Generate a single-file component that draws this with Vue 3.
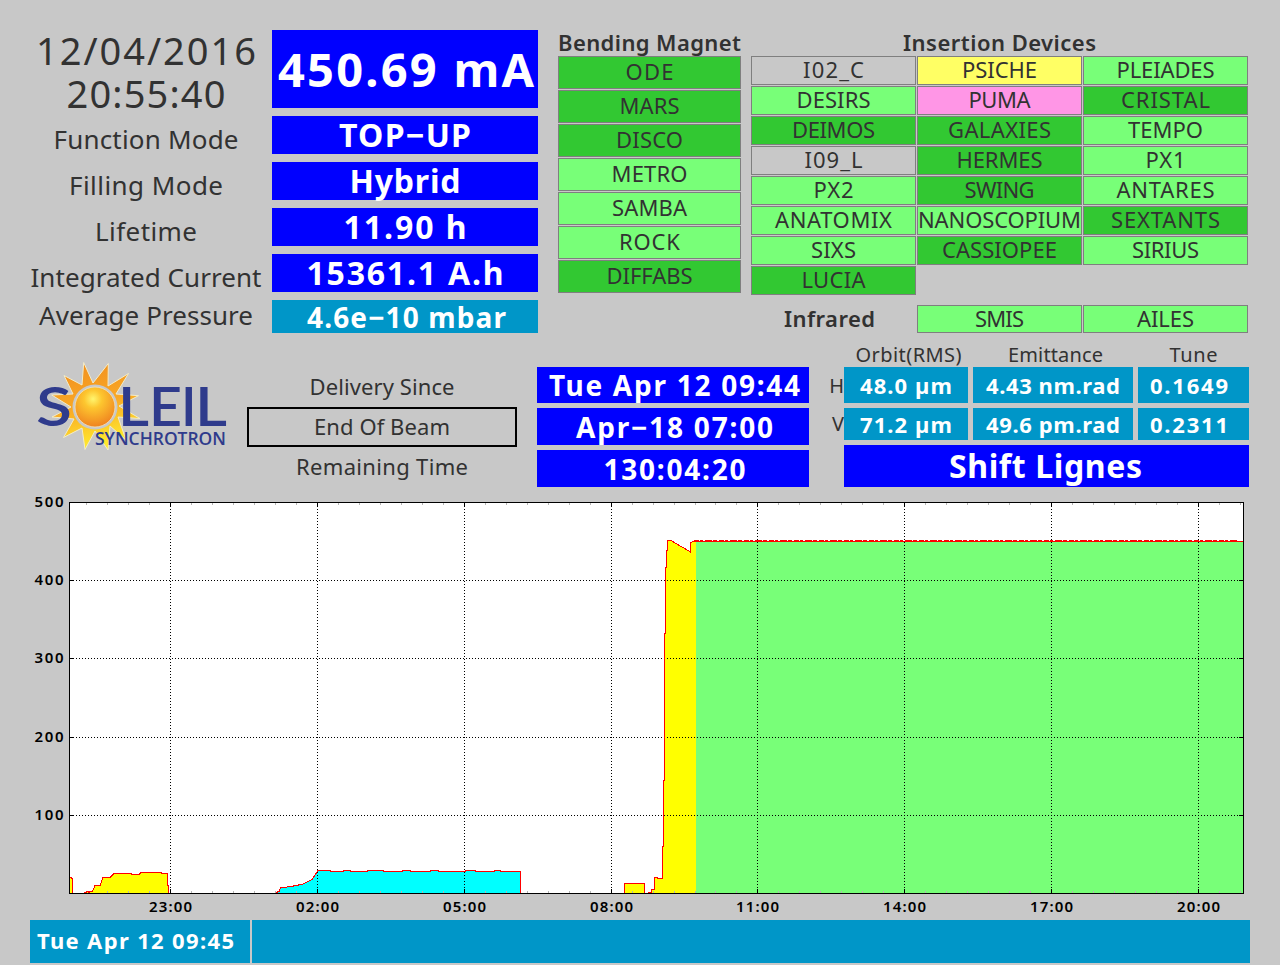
<template>
  <div class="panel">
    <section class="top">
      <div class="labels">
        <div class="clock"><span v-fit="220">12/04/2016</span></div>
        <div class="clock"><span v-fit="159">20:55:40</span></div>
        <div v-for="item in machine" :key="item.label" class="label">
          <span v-fit="item.labelWidth">{{ item.label }}</span>
        </div>
      </div>

      <div class="values">
        <div class="value current"><span v-fit="256">450.69 mA</span></div>
        <div v-for="item in machine" :key="item.value" class="value">
          <span v-fit="item.valueWidth">{{ item.value }}</span>
        </div>
      </div>

      <div class="magnets">
        <h2><span v-fit="183">Bending Magnet</span></h2>
        <div v-for="line in magnets" :key="line.name" class="beamline" :class="line.state">
          <span v-fit="line.width">{{ line.name }}</span>
        </div>
      </div>

      <div class="insertion">
        <h2><span v-fit="193">Insertion Devices</span></h2>
        <div class="insertion-grid">
          <div v-for="line in devices" :key="line.name" class="beamline" :class="line.state">
            <span v-fit="line.width">{{ line.name }}</span>
          </div>
        </div>
        <div class="infrared">
          <h2><span v-fit="91">Infrared</span></h2>
          <div class="beamline open"><span v-fit="49">SMIS</span></div>
          <div class="beamline open"><span v-fit="57">AILES</span></div>
        </div>
      </div>
    </section>

    <section class="middle">
      <svg class="logo" viewBox="30 358 205 96" width="205" height="96">
        <defs>
          <radialGradient id="sun" cx="0.45" cy="0.3" r="0.75">
            <stop offset="0" stop-color="#fff56e" />
            <stop offset="0.3" stop-color="#fdc62f" />
            <stop offset="1" stop-color="#ee7c1e" />
          </radialGradient>
          <linearGradient id="rays" x1="0" y1="0" x2="0.25" y2="1">
            <stop offset="0" stop-color="#f08c1e" />
            <stop offset="0.55" stop-color="#f9a825" />
            <stop offset="1" stop-color="#ffe92e" />
          </linearGradient>
        </defs>
        <polygon
          points="83.7,362.5 93,383 108.3,363.5 108,386 128.5,373.5 116,394 138.5,395.7 119,406 140,418.5 118,417 126,440 110,426 108,450 95,431 85,449.5 82,428 63.5,437.5 74,419 52,417 71,407 51.7,395 73,394 64,375.5 82,385"
          fill="url(#rays)"
          stroke="#f2ecca"
          stroke-width="1"
        />
        <circle cx="95" cy="407" r="22.5" fill="#c8c8c8" />
        <circle cx="95" cy="407" r="20" fill="url(#sun)" stroke="#f1e3bd" stroke-width="0.8" />
        <g class="logo-name">
          <text x="36" y="426" textLength="36" lengthAdjust="spacingAndGlyphs">S</text>
          <text x="118" y="426" textLength="31" lengthAdjust="spacingAndGlyphs">L</text>
          <text x="149" y="426" textLength="33" lengthAdjust="spacingAndGlyphs">E</text>
          <text x="181" y="426">I</text>
          <text x="195" y="426" textLength="32" lengthAdjust="spacingAndGlyphs">L</text>
        </g>
        <text class="logo-sub" x="95" y="445" textLength="131" lengthAdjust="spacingAndGlyphs">SYNCHROTRON</text>
      </svg>

      <div class="delivery-labels">
        <div class="delivery-label"><span v-fit="145">Delivery Since</span></div>
        <div class="delivery-label boxed"><span v-fit="136">End Of Beam</span></div>
        <div class="delivery-label"><span v-fit="172">Remaining Time</span></div>
      </div>

      <div class="delivery-values">
        <div class="value"><span v-fit="251">Tue Apr 12 09:44</span></div>
        <div class="value"><span v-fit="197">Apr−18 07:00</span></div>
        <div class="value"><span v-fit="142">130:04:20</span></div>
      </div>

      <div class="axis-names">
        <div>H</div>
        <div>V</div>
      </div>

      <div class="beam">
        <div class="beam-head"><span v-fit="106">Orbit(RMS)</span></div>
        <div class="beam-head"><span v-fit="95">Emittance</span></div>
        <div class="beam-head"><span v-fit="48">Tune</span></div>
        <div v-for="cell in beam" :key="cell.text" class="value">
          <span v-fit="cell.width">{{ cell.text }}</span>
        </div>
        <div class="value shift"><span v-fit="193">Shift Lignes</span></div>
      </div>
    </section>

    <svg class="chart" viewBox="30 497 1220 423" width="1220" height="423">
      <rect x="69" y="502" width="1175" height="392" fill="#fff" />

      <path v-for="area in areas" :key="area.d" :d="area.d" :fill="area.fill" />

      <g shape-rendering="crispEdges">
        <line v-for="x in minorTicks" :key="'b' + x" :x1="x" :x2="x" y1="891" y2="893" stroke="#b4b4b4" />
        <line v-for="x in minorTicks" :key="'t' + x" :x1="x" :x2="x" y1="503" y2="505" stroke="#b4b4b4" />
        <g stroke="#000" stroke-dasharray="1 2">
          <line v-for="t in xTicks" :key="t.text" :x1="t.x" :x2="t.x" y1="503" y2="893" />
          <line v-for="t in yTicks" :key="t.text" :y1="t.y" :y2="t.y" x1="70" x2="1243" />
        </g>
        <g stroke="#000">
          <line v-for="t in xTicks" :key="'b' + t.text" :x1="t.x" :x2="t.x" y1="889" y2="893" />
          <line v-for="t in xTicks" :key="'t' + t.text" :x1="t.x" :x2="t.x" y1="503" y2="507" />
          <line v-for="t in yTicks" :key="'l' + t.text" :y1="t.y" :y2="t.y" x1="70" x2="74" />
          <line v-for="t in yTicks" :key="'r' + t.text" :y1="t.y" :y2="t.y" x1="1239" x2="1243" />
        </g>
        <path v-for="d in curves" :key="d" :d="d" fill="none" stroke="#f00" />
        <rect x="69.5" y="502.5" width="1174" height="391" fill="none" stroke="#000" />
      </g>

      <g class="tick-text">
        <text x="34.5" y="507" textLength="29">500</text>
        <text v-for="t in yTicks" :key="t.text" x="34.5" :y="t.y + 4.5" textLength="29">{{ t.text }}</text>
        <text v-for="t in xTicks" :key="t.text" :x="t.x - 21.5" y="912" textLength="43">{{ t.text }}</text>
      </g>
    </svg>

    <footer class="status">
      <div class="status-time"><span v-fit="197">Tue Apr 12 09:45</span></div>
      <div class="status-message"></div>
    </footer>
  </div>
</template>

<script setup>
// Spreads the letters of an element so that the text takes the given width
const vFit = {
  mounted(el, { value }) {
    const count = el.textContent.length
    const spacing = (value - el.getBoundingClientRect().width) / (count - 1)
    el.style.letterSpacing = spacing + 'px'
    el.style.marginRight = -spacing + 'px'
  }
}

const machine = [
  { label: 'Function Mode', labelWidth: 185, value: 'TOP−UP', valueWidth: 132 },
  { label: 'Filling Mode', labelWidth: 154, value: 'Hybrid', valueWidth: 111 },
  { label: 'Lifetime', labelWidth: 102, value: '11.90 h', valueWidth: 123 },
  { label: 'Integrated Current', labelWidth: 231, value: '15361.1 A.h', valueWidth: 197 },
  { label: 'Average Pressure', labelWidth: 214, value: '4.6e−10 mbar', valueWidth: 199 }
]

const magnets = [
  { name: 'ODE', state: 'beam-on', width: 48 },
  { name: 'MARS', state: 'beam-on', width: 60 },
  { name: 'DISCO', state: 'beam-on', width: 67 },
  { name: 'METRO', state: 'open', width: 76 },
  { name: 'SAMBA', state: 'open', width: 75 },
  { name: 'ROCK', state: 'open', width: 61 },
  { name: 'DIFFABS', state: 'beam-on', width: 86 }
]

const devices = [
  { name: 'I02_C', state: 'off', width: 61 },
  { name: 'PSICHE', state: 'waiting', width: 75 },
  { name: 'PLEIADES', state: 'open', width: 98 },
  { name: 'DESIRS', state: 'open', width: 74 },
  { name: 'PUMA', state: 'fault', width: 62 },
  { name: 'CRISTAL', state: 'beam-on', width: 89 },
  { name: 'DEIMOS', state: 'beam-on', width: 83 },
  { name: 'GALAXIES', state: 'beam-on', width: 103 },
  { name: 'TEMPO', state: 'open', width: 75 },
  { name: 'I09_L', state: 'off', width: 58 },
  { name: 'HERMES', state: 'beam-on', width: 86 },
  { name: 'PX1', state: 'open', width: 40 },
  { name: 'PX2', state: 'open', width: 40 },
  { name: 'SWING', state: 'beam-on', width: 70 },
  { name: 'ANTARES', state: 'open', width: 98 },
  { name: 'ANATOMIX', state: 'open', width: 117 },
  { name: 'NANOSCOPIUM', state: 'open', width: 163 },
  { name: 'SEXTANTS', state: 'beam-on', width: 109 },
  { name: 'SIXS', state: 'open', width: 45 },
  { name: 'CASSIOPEE', state: 'beam-on', width: 115 },
  { name: 'SIRIUS', state: 'open', width: 67 },
  { name: 'LUCIA', state: 'beam-on', width: 64 }
]

const beam = [
  { text: '48.0 µm', width: 92 },
  { text: '4.43 nm.rad', width: 134 },
  { text: '0.1649', width: 78 },
  { text: '71.2 µm', width: 92 },
  { text: '49.6 pm.rad', width: 134 },
  { text: '0.2311', width: 78 }
]

const xTicks = [
  { x: 170.5, text: '23:00' },
  { x: 317.5, text: '02:00' },
  { x: 464.5, text: '05:00' },
  { x: 611.5, text: '08:00' },
  { x: 757.5, text: '11:00' },
  { x: 904.5, text: '14:00' },
  { x: 1051.5, text: '17:00' },
  { x: 1198.5, text: '20:00' }
]

const yTicks = [
  { y: 580.5, text: '400' },
  { y: 658.5, text: '300' },
  { y: 737.5, text: '200' },
  { y: 815.5, text: '100' }
]

// Seven minor intervals between two labelled hours
const minorTicks = []
for (let i = -4; i <= 51; i++) {
  if (i % 7 !== 0) minorTicks.push(Math.floor(170.5 + i * 20.98) + 0.5)
}

const start = 'M69.5 877.5H71.5V878.5H72.5V893'
const evening = 'M84 892.5H86.5V891.5H88.5V892.5H89.5V891.5H92.5L95 885.5H100L103 877.5H110L114 873.5H131.5V874.5H139L141 872.5H161.5V873.5H167.5V885.5H168.5V893'
const night = 'M276 892.5L279 891.5L280.5 887.5H286L288 886.5H292L295 885.5H298L299 884.5H302L312 879.5L318 870.5H330V871.5H343V870.5H350V871.5H367V870.5H383V871.5H402V870.5H410V871.5H430V870.5H438V871.5H465V870.5H475V871.5H494V870.5H500V871.5H520.5V893'
const step = 'M624.5 893V883.5H644.5V893'
const ramp = 'M648 892.5H651.5V889.5H654.5V877.5H657.5V878.5H662.5V846.5H663.5V780H664.5V633H665.5V567.5H666.5V550.5H667.5V540.5H671L690.5 552V542.5L694 541H696'

// Top-up keeps the current flat, with a one pixel ripple
const plateau = 'M694 541.5H1243'
let ripple = ''
for (let x = 694, i = 0; x < 1236; i++) {
  const run = [5, 3, 7, 4][i % 4]
  ripple += `M${x} 540.5h${run}`
  x += run + 1 + (i % 2)
}

const areas = [
  { d: start + 'H69Z', fill: '#ffff00' },
  { d: evening + 'H84Z', fill: '#ffff00' },
  { d: night + 'H276Z', fill: '#00ffff' },
  { d: step + 'Z', fill: '#ffff00' },
  { d: ramp + 'V893H648Z', fill: '#ffff00' },
  { d: 'M696 541H1243V893H696Z', fill: '#78ff78' }
]

const curves = [start, evening, night, step, ramp, plateau, ripple]
</script>

<style>
body {
  margin: 0;
  background: #c8c8c8;
}
</style>

<style scoped>
* {
  box-sizing: border-box;
}

.panel {
  width: 1280px;
  height: 965px;
  padding: 30px 30px 0;
  overflow: hidden;
  background: #c8c8c8;
  color: #323232;
  font-family: 'Noto Sans', 'Open Sans', sans-serif;
}

span {
  display: inline-block;
  white-space: pre;
}

.top {
  display: flex;
  height: 303px;
}

.labels {
  width: 232px;
  margin-right: 10px;
}

.clock {
  display: flex;
  justify-content: center;
  align-items: center;
  height: 43px;
  padding-bottom: 3px;
  font-size: 38px;
  line-height: 40px;
}

.label {
  display: flex;
  justify-content: center;
  align-items: center;
  height: 46px;
  font-size: 26px;
}

.label:last-child {
  height: 33px;
  padding-bottom: 2px;
  line-height: 31px;
}

.values {
  display: flex;
  flex-direction: column;
  gap: 8px;
  width: 266px;
  margin-right: 20px;
}

.value {
  display: flex;
  justify-content: center;
  align-items: center;
  height: 38px;
  background: #0000ff;
  color: #fff;
  font-size: 32px;
  font-weight: 700;
  line-height: 1;
}

.values .current {
  height: 78px;
  padding-left: 2px;
  font-size: 47px;
}

.values .value:last-child {
  height: 33px;
  padding-left: 3px;
  background: #0096c8;
  font-size: 28px;
}

h2 {
  display: flex;
  justify-content: center;
  align-items: center;
  height: 26px;
  margin: 0;
  padding-bottom: 2px;
  font-size: 22px;
  font-weight: 600;
  line-height: 24px;
}

.magnets {
  display: flex;
  flex-direction: column;
  gap: 1px;
  width: 183px;
  margin-right: 10px;
}

.magnets h2 {
  height: 25px;
  padding-bottom: 1px;
}

.beamline {
  display: flex;
  justify-content: center;
  align-items: center;
  height: 33px;
  padding-bottom: 3px;
  border: 1px solid #7f7f7f;
  font-size: 22px;
  line-height: 22px;
}

.insertion {
  width: 497px;
}

.insertion-grid {
  display: grid;
  grid-template-columns: repeat(3, 165px);
  gap: 1px;
}

.insertion-grid .beamline {
  height: 29px;
}

.infrared {
  display: grid;
  grid-template-columns: repeat(3, 165px);
  gap: 1px;
  margin-top: 10px;
}

.infrared h2,
.infrared .beamline {
  height: 28px;
  padding-bottom: 2px;
}

.infrared h2 {
  padding-right: 8px;
}

.beam-on {
  background: #32c832;
}

.open {
  background: #78ff78;
}

.waiting {
  background: #ffff64;
}

.fault {
  background: #ff96e6;
}

.middle {
  display: flex;
  height: 154px;
}

.logo {
  margin: 25px 12px 0 0;
}

.logo-name {
  fill: #2f3b8c;
  font-family: Lato, sans-serif;
  font-size: 54px;
  font-weight: 600;
}

.logo-sub {
  fill: #2f3b8c;
  font-family: 'Open Sans', sans-serif;
  font-size: 17.5px;
  font-weight: 600;
}

.delivery-labels {
  width: 270px;
  margin: 34px 20px 0 0;
}

.delivery-label {
  display: flex;
  justify-content: center;
  align-items: center;
  height: 40px;
  padding-bottom: 2px;
  font-size: 22px;
}

.delivery-label.boxed {
  border: 2px solid #000;
}

.delivery-values {
  display: flex;
  flex-direction: column;
  gap: 5px;
  width: 272px;
  margin-top: 34px;
}

.delivery-values .value {
  height: 37px;
  padding-left: 3px;
  font-size: 28px;
}

.delivery-values .value:first-child {
  height: 36px;
}

.axis-names {
  width: 35px;
  margin-top: 34px;
  font-size: 20px;
  line-height: 38px;
  text-align: right;
}

.beam {
  display: grid;
  grid-template-columns: 124px 160px 111px;
  grid-template-rows: 22px 36px 32px 42px;
  column-gap: 5px;
  row-gap: 5px;
  margin-top: 7px;
}

.beam-head {
  display: flex;
  justify-content: center;
  align-items: center;
  padding: 8px 0 0 5px;
  font-size: 20px;
  line-height: 20px;
}

.beam-head:nth-child(3) {
  padding-left: 0;
}

.beam .value {
  height: auto;
  padding-bottom: 1px;
  background: #0096c8;
  font-size: 22px;
}

.beam .value:nth-child(3n) {
  padding-right: 9px;
}

.beam .shift {
  grid-column: 1 / -1;
  padding-right: 2px;
  background: #0000ff;
  font-size: 32px;
}

.chart {
  display: block;
  margin-top: 10px;
  overflow: visible;
}

.tick-text {
  fill: #000;
  font-size: 15px;
  font-weight: 600;
}

.status {
  display: flex;
  gap: 2px;
  height: 43px;
}

.status-time {
  display: flex;
  align-items: center;
  width: 220px;
  padding: 0 0 3px 7px;
  background: #0096c8;
  color: #fff;
  font-size: 22px;
  font-weight: 700;
}

.status-message {
  flex: 1;
  background: #0096c8;
}
</style>
